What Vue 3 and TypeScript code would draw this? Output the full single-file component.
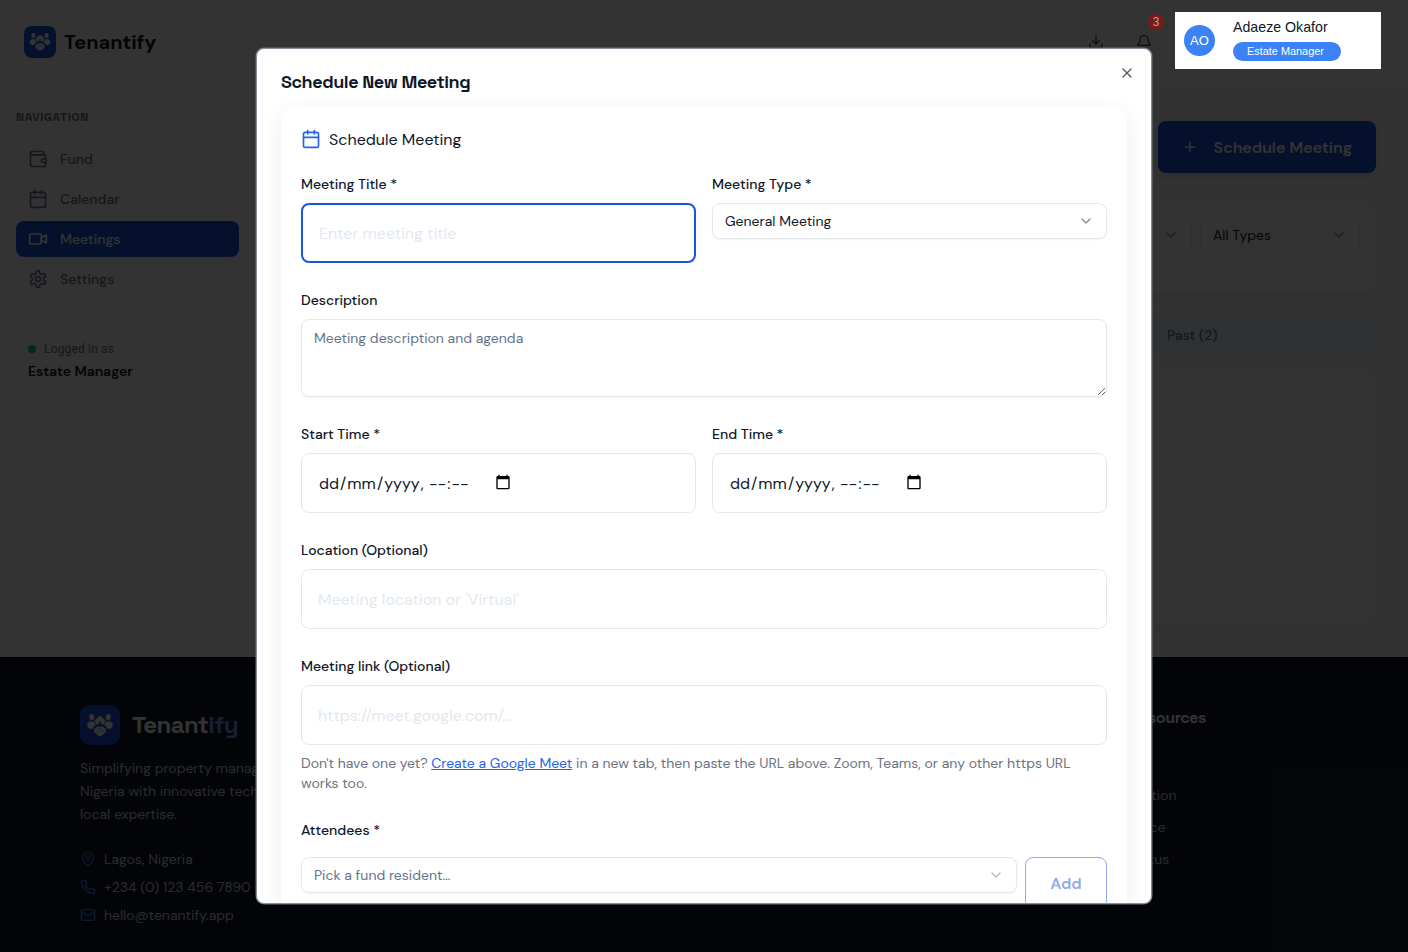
<script setup lang="ts">
import { h, type FunctionalComponent } from 'vue'

const iconPaths: Record<string, string[]> = {
  wallet: [
    'M19 7V4a1 1 0 0 0-1-1H5a2 2 0 0 0 0 4h15a1 1 0 0 1 1 1v4h-3a2 2 0 0 0 0 4h3a1 1 0 0 0 1-1v-2a1 1 0 0 0-1-1',
    'M3 5v14a2 2 0 0 0 2 2h15a1 1 0 0 0 1-1v-4',
  ],
  calendar: ['M8 2v4', 'M16 2v4', 'M5 4h14a2 2 0 0 1 2 2v14a2 2 0 0 1-2 2H5a2 2 0 0 1-2-2V6a2 2 0 0 1 2-2z', 'M3 10h18'],
  video: ['m16 13 5.223 3.482a.5.5 0 0 0 .777-.416V7.87a.5.5 0 0 0-.752-.432L16 10.5', 'M4 6h10a2 2 0 0 1 2 2v8a2 2 0 0 1-2 2H4a2 2 0 0 1-2-2V8a2 2 0 0 1 2-2z'],
  settings: [
    'M12.22 2h-.44a2 2 0 0 0-2 2v.18a2 2 0 0 1-1 1.73l-.43.25a2 2 0 0 1-2 0l-.15-.08a2 2 0 0 0-2.73.73l-.22.38a2 2 0 0 0 .73 2.73l.15.1a2 2 0 0 1 1 1.72v.51a2 2 0 0 1-1 1.74l-.15.09a2 2 0 0 0-.73 2.73l.22.38a2 2 0 0 0 2.73.73l.15-.08a2 2 0 0 1 2 0l.43.25a2 2 0 0 1 1 1.73V20a2 2 0 0 0 2 2h.44a2 2 0 0 0 2-2v-.18a2 2 0 0 1 1-1.73l.43-.25a2 2 0 0 1 2 0l.15.08a2 2 0 0 0 2.73-.73l.22-.39a2 2 0 0 0-.73-2.73l-.15-.08a2 2 0 0 1-1-1.74v-.5a2 2 0 0 1 1-1.74l.15-.09a2 2 0 0 0 .73-2.73l-.22-.38a2 2 0 0 0-2.73-.73l-.15.08a2 2 0 0 1-2 0l-.43-.25a2 2 0 0 1-1-1.73V4a2 2 0 0 0-2-2z',
    'M15 12a3 3 0 1 1-6 0 3 3 0 0 1 6 0z',
  ],
  download: ['M12 15V3', 'M21 15v4a2 2 0 0 1-2 2H5a2 2 0 0 1-2-2v-4', 'm7 10 5 5 5-5'],
  bell: ['M10.268 21a2 2 0 0 0 3.464 0', 'M3.262 15.326A1 1 0 0 0 4 17h16a1 1 0 0 0 .74-1.673C19.41 13.956 18 12.499 18 8A6 6 0 0 0 6 8c0 4.499-1.411 5.956-2.738 7.326'],
  plus: ['M5 12h14', 'M12 5v14'],
  x: ['M18 6 6 18', 'm6 6 12 12'],
  chevron: ['m6 9 6 6 6-6'],
  pin: ['M20 10c0 4.993-5.539 10.193-7.399 11.799a1 1 0 0 1-1.202 0C9.539 20.193 4 14.993 4 10a8 8 0 0 1 16 0', 'M15 10a3 3 0 1 1-6 0 3 3 0 0 1 6 0z'],
  phone: ['M22 16.92v3a2 2 0 0 1-2.18 2 19.79 19.79 0 0 1-8.63-3.07 19.5 19.5 0 0 1-6-6 19.79 19.79 0 0 1-3.07-8.67A2 2 0 0 1 4.11 2h3a2 2 0 0 1 2 1.72 12.84 12.84 0 0 0 .7 2.81 2 2 0 0 1-.45 2.11L8.09 9.91a16 16 0 0 0 6 6l1.27-1.27a2 2 0 0 1 2.11-.45 12.84 12.84 0 0 0 2.81.7A2 2 0 0 1 22 16.92z'],
  mail: ['M4 4h16a2 2 0 0 1 2 2v12a2 2 0 0 1-2 2H4a2 2 0 0 1-2-2V6a2 2 0 0 1 2-2z', 'm22 7-8.97 5.7a1.94 1.94 0 0 1-2.06 0L2 7'],
}

const Icon: FunctionalComponent<{ name: string; size?: number }> = (props) =>
  h(
    'svg',
    {
      width: props.size ?? 16,
      height: props.size ?? 16,
      viewBox: '0 0 24 24',
      fill: 'none',
      stroke: 'currentColor',
      'stroke-width': 2,
      'stroke-linecap': 'round',
      'stroke-linejoin': 'round',
    },
    iconPaths[props.name].map((d) => h('path', { d })),
  )
Icon.props = ['name', 'size']

const BrandMark: FunctionalComponent<{ size: number }> = (props) =>
  h('svg', { width: props.size, height: props.size, viewBox: '0 0 32 32' }, [
    h('rect', { width: 32, height: 32, rx: 8, fill: '#1a56db' }),
    h('g', { fill: '#fff' }, [
      h('ellipse', { cx: 9.4, cy: 9.6, rx: 2.1, ry: 2.5 }),
      h('ellipse', { cx: 22.6, cy: 9.6, rx: 2.1, ry: 2.5 }),
      h('path', { d: 'M16 8.4l-5 4.600h1.400v3l1.600-.8h4l1.600.8v-3h1.400z' }),
      h('path', { d: 'M5.800 16c0-2 1.400-3 3.200-3 1.400 0 2.400.7 2.800 1.700l.4 1.500-2.800 3C7.200 19.200 5.800 18 5.800 16z' }),
      h('path', { d: 'M26.200 16c0-2-1.400-3-3.200-3-1.400 0-2.400.7-2.800 1.700l-.4 1.500 2.800 3c2.200 0 3.600-1.200 3.600-3.200z' }),
      h('path', { d: 'M11.200 19.400l3-2.500 1.800.6 1.800-.6 3 2.500-.4 2.600-3.300 2.600h-2.200l-3.300-2.600z' }),
    ]),
    h('path', { d: 'M15.300 13h1.400v2.200h-1.400z', fill: '#1a56db' }),
    h('path', { d: 'M13.400 20.200l2.400-1.600 3.600 3M13 22l1.400-1.200M14.400 23.200l1.400-1.400', stroke: '#1a56db', 'stroke-width': 0.45, fill: 'none' }),
  ])
BrandMark.props = ['size']

const navItems = [
  { label: 'Fund', icon: 'wallet', active: false },
  { label: 'Calendar', icon: 'calendar', active: false },
  { label: 'Meetings', icon: 'video', active: true },
  { label: 'Settings', icon: 'settings', active: false },
]
const contacts = [
  { icon: 'pin', text: 'Lagos, Nigeria' },
  { icon: 'phone', text: '+234 (0) 123 456 7890' },
  { icon: 'mail', text: 'hello@tenantify.app' },
]
const resourceLinks = ['Community', 'Documentation', 'API Reference', 'System Status']
const timeFields = ['Start Time *', 'End Time *']
</script>

<template>
  <div class="page">
    <header class="topbar">
      <div class="brand"><BrandMark :size="32" /><span>Tenantify</span></div>
      <div class="tools">
        <Icon name="download" />
        <Icon name="bell" />
      </div>
    </header>

    <div class="body">
      <aside class="sidebar">
        <div class="nav-title">NAVIGATION</div>
        <nav>
          <a v-for="item in navItems" :key="item.label" class="nav-item" :class="{ active: item.active }">
            <Icon :name="item.icon" :size="20" />{{ item.label }}
          </a>
        </nav>
        <div class="session">
          <div class="session-line"><i class="dot"></i>Logged in as</div>
          <strong>Estate Manager</strong>
        </div>
      </aside>

      <main class="main">
        <div class="actions">
          <button class="primary"><Icon name="plus" />Schedule Meeting</button>
        </div>
        <section class="panel filters">
          <div class="select narrow"><span></span><Icon name="chevron" class="chev" /></div>
          <div class="select narrow"><span>All Types</span><Icon name="chevron" class="chev" /></div>
        </section>
        <div class="tabs"><span>Past (2)</span></div>
        <section class="panel results"></section>
      </main>
    </div>

    <footer class="footer">
      <div class="about">
        <div class="footer-brand"><BrandMark :size="40" /><span>Tenant<em>ify</em></span></div>
        <p>Simplifying property management in<br />Nigeria with innovative technology and<br />local expertise.</p>
        <ul class="contacts">
          <li v-for="c in contacts" :key="c.text"><Icon :name="c.icon" />{{ c.text }}</li>
        </ul>
      </div>
      <div class="links">
        <h4>Legal Resources</h4>
        <a v-for="l in resourceLinks" :key="l">{{ l }}</a>
      </div>
    </footer>

    <div class="overlay">
      <div class="dialog" role="dialog">
        <h2>Schedule New Meeting</h2>
        <Icon name="x" class="close" />
        <div class="card">
          <div class="card-title"><Icon name="calendar" :size="20" /><span>Schedule Meeting</span></div>

          <div class="row">
            <div class="field">
              <label>Meeting Title *</label>
              <input class="input focused" placeholder="Enter meeting title" />
            </div>
            <div class="field">
              <label>Meeting Type *</label>
              <div class="select"><span>General Meeting</span><Icon name="chevron" class="chev" /></div>
            </div>
          </div>

          <div class="field">
            <label>Description</label>
            <textarea class="textarea" placeholder="Meeting description and agenda"></textarea>
          </div>

          <div class="row">
            <div v-for="t in timeFields" :key="t" class="field">
              <label>{{ t }}</label>
              <div class="input datetime">
                <div class="segments">
                  <span>dd</span>/<span>mm</span>/<span>yyyy</span>,&nbsp;<span>--</span>:<span>--</span>
                </div>
                <svg width="16" height="16" viewBox="0 0 24 24">
                  <path d="M20 3h-1V1h-2v2H7V1H5v2H4c-1.100 0-2 .9-2 2v16c0 1.100.9 2 2 2h16c1.100 0 2-.9 2-2V5c0-1.100-.9-2-2-2zm0 18H4V8h16v13z" />
                </svg>
              </div>
            </div>
          </div>

          <div class="field">
            <label>Location (Optional)</label>
            <input class="input" placeholder="Meeting location or 'Virtual'" />
          </div>

          <div class="field">
            <label>Meeting link (Optional)</label>
            <input class="input" placeholder="https://meet.google.com/..." />
            <p class="hint">
              Don't have one yet? <a>Create a Google Meet</a> in a new tab, then paste the URL above. Zoom, Teams, or any
              other https URL works too.
            </p>
          </div>

          <div class="field attendees">
            <label>Attendees *</label>
            <div class="picker">
              <div class="select muted"><span>Pick a fund resident…</span><Icon name="chevron" class="chev" /></div>
              <button class="add">Add</button>
            </div>
          </div>
        </div>
      </div>
    </div>

    <span class="badge">3</span>
    <div class="user">
      <span class="avatar">AO</span>
      <div>
        <div class="user-name">Adaeze Okafor</div>
        <span class="role">Estate Manager</span>
      </div>
    </div>
  </div>
</template>

<style>
body { margin: 0; overflow: hidden; }
</style>

<style scoped>
* { box-sizing: border-box; }
.page {
  position: relative;
  width: 1408px;
  height: 952px;
  overflow: hidden;
  display: flex;
  flex-direction: column;
  background: #fbfbfb;
  color: #0f172a;
  font: 400 14px/20px 'DM Sans', Inter, sans-serif;
}
svg { flex: none; display: block; }
button, input, textarea { font-family: inherit; }

.topbar {
  height: 85px;
  flex: none;
  display: flex;
  align-items: center;
  justify-content: space-between;
  padding: 0 256px 0 24px;
  background: #fff;
  border-bottom: 1px solid #eceff3;
}
.brand { display: flex; align-items: center; gap: 8px; font-size: 20px; font-weight: 700; line-height: 28px; }
.tools { display: flex; gap: 32px; color: #334155; }

.body { flex: none; height: 572px; display: flex; }
.sidebar { width: 256px; flex: none; padding: 22px 17px 0 16px; background: #fff; }
.nav-title {
  font-family: 'Space Grotesk', 'DM Sans', sans-serif;
  font-size: 12px;
  font-weight: 600;
  letter-spacing: 0.6px;
  color: #64748b;
}
nav { display: flex; flex-direction: column; gap: 4px; margin-top: 14px; }
.nav-item {
  display: flex;
  align-items: center;
  gap: 12px;
  height: 36px;
  padding: 0 12px;
  border-radius: 8px;
  font-weight: 500;
  color: #64748b;
}
.nav-item.active { background: #1a56db; color: #fff; }
.session { margin-top: 32px; height: 63px; padding: 10px 12px; border-radius: 8px; background: #fcfdfe; }
.session-line {
  display: flex;
  align-items: center;
  gap: 8px;
  font-family: Roboto, 'DM Sans', sans-serif;
  font-size: 12px;
  letter-spacing: 0.17px;
  color: #64748b;
}
.session strong { display: block; margin-top: 2px; font-weight: 600; }
.dot { width: 8px; height: 8px; border-radius: 50%; background: #10b981; }

.main { flex: 1; padding: 36px 32px 0; }
.actions { display: flex; justify-content: flex-end; }
.primary {
  display: flex;
  align-items: center;
  gap: 16px;
  height: 52px;
  padding: 0 24px;
  border: 0;
  border-radius: 8px;
  background: #1a56db;
  color: #fff;
  font-size: 16px;
  font-weight: 600;
  box-shadow: 0 4px 12px rgba(0, 0, 0, 0.12);
}
.panel { border-radius: 16px; background: #fff; box-shadow: 0 4px 16px rgba(0, 0, 0, 0.08); }
.filters { display: flex; justify-content: flex-end; gap: 8px; height: 92px; margin-top: 28px; padding: 16px; }
.tabs {
  display: flex;
  align-items: center;
  height: 36px;
  margin-top: 24px;
  padding-left: 879px;
  border-radius: 8px;
  background: #f1f5f9;
  color: #64748b;
  font-weight: 500;
}
.results { height: 256px; margin-top: 16px; }

.footer {
  flex: 1;
  display: grid;
  grid-template-columns: 1fr 252px;
  padding: 48px 80px 0;
  background: #0f172a;
  color: #d1d5db;
}
.footer-brand {
  display: flex;
  align-items: center;
  gap: 12px;
  color: #fff;
  font: 700 24px/32px 'Space Grotesk', 'DM Sans', sans-serif;
  letter-spacing: -0.6px;
}
.footer-brand em { font-style: normal; color: #60a5fa; }
.about p { margin: 12px 0 24px; line-height: 22.75px; }
.contacts { list-style: none; margin: 0; padding: 0; display: flex; flex-direction: column; gap: 8px; }
.contacts li { display: flex; align-items: center; gap: 8px; }
.contacts svg { color: #3b82f6; }
.links { display: flex; flex-direction: column; gap: 12px; padding-top: 1px; }
.links h4 {
  margin: 0 0 11px 10px;
  color: #fff;
  font: 600 16px/24px 'Space Grotesk', 'DM Sans', sans-serif;
  letter-spacing: -0.4px;
}

.overlay {
  position: absolute;
  inset: 0;
  display: grid;
  place-items: center;
  background: rgba(0, 0, 0, 0.8);
}
.dialog {
  position: relative;
  width: 896px;
  height: 856.8px;
  overflow: hidden;
  padding: 24px;
  border: 1px solid #868d96;
  border-radius: 8px;
  background: #fff;
  box-shadow: 0 0 0 0.5px #6b7280;
}
.dialog h2 { margin: 0 0 16px; font: 600 18px/18px 'Space Grotesk', 'DM Sans', sans-serif; letter-spacing: -0.45px; }
.close { position: absolute; top: 16px; right: 16px; opacity: 0.7; }
.card {
  display: flex;
  flex-direction: column;
  gap: 28px;
  padding: 20px 20px 60px;
  border-radius: 16px;
  background: #fff;
  box-shadow: 0 4px 20px rgba(0, 0, 0, 0.08);
}
.card-title { display: flex; align-items: center; gap: 8px; height: 24px; margin-bottom: -4px; font-size: 16px; line-height: 24px; }
.card-title span { padding-top: 2px; }
.card-title svg { color: #2563eb; }
.row { display: grid; grid-template-columns: 1fr 1fr; gap: 16px; }
.field { display: flex; flex-direction: column; gap: 8px; }
.field label { height: 20px; line-height: 18px; font-weight: 500; }
.input {
  width: 100%;
  height: 60px;
  padding: 2px 16px 0;
  border: 1px solid #e2e8f0;
  border-radius: 8px;
  outline: 0;
  background: #fff;
  color: #0f172a;
  font-size: 16px;
}
.input::placeholder { color: #e2e8f0; opacity: 1; }
.input.focused { border: 2px solid #1a56db; }
.select {
  display: flex;
  align-items: center;
  justify-content: space-between;
  width: 100%;
  height: 36px;
  padding: 0 12px;
  border: 1px solid #e2e8f0;
  border-radius: 8px;
  box-shadow: 0 1px 2px rgba(0, 0, 0, 0.05);
}
.select.narrow { width: 160px; }
.select.muted { color: #64748b; flex: 1; }
.chev { opacity: 0.5; }
.textarea {
  display: block;
  width: 100%;
  height: 78px;
  padding: 8px 12px;
  border: 1px solid #e2e8f0;
  border-radius: 8px;
  outline: 0;
  background: #fff;
  font-size: 14px;
  line-height: 20px;
  box-shadow: 0 1px 2px rgba(0, 0, 0, 0.05);
}
.textarea::placeholder { color: #64748b; opacity: 1; }
.datetime { display: flex; align-items: center; gap: 25.5px; }
.datetime svg { margin-bottom: 3px; }
.segments { display: flex; }
.segments span { padding: 0 1px; }
.hint { margin: 0; color: #6b7280; }
.hint a { color: #2563eb; text-decoration: underline; }
.field.attendees { gap: 16px; }
.picker { display: flex; align-items: flex-start; gap: 8px; }
.add {
  width: 82px;
  height: 52px;
  padding: 2px 0 0;
  border: 1px solid #1a56db;
  border-radius: 8px;
  background: #fff;
  color: #1a56db;
  font-size: 16px;
  font-weight: 600;
  opacity: 0.5;
}

.badge {
  position: absolute;
  left: 1148px;
  top: 14px;
  width: 16px;
  height: 16px;
  border-radius: 50%;
  background: #7c1a1a;
  color: #a8a8a8;
  font: 400 12px/16px 'Liberation Sans', Arial, sans-serif;
  text-align: center;
}
.user {
  position: absolute;
  left: 1175px;
  top: 12px;
  width: 206px;
  height: 57px;
  display: flex;
  gap: 18px;
  padding: 6px 9px;
  background: #fff;
  font-family: 'Liberation Sans', Arial, sans-serif;
}
.avatar {
  width: 31px;
  height: 31px;
  margin-top: 7px;
  border-radius: 50%;
  background: #3b82f6;
  color: #fff;
  font-size: 13px;
  line-height: 31px;
  text-align: center;
}
.user-name { font-size: 14.2px; line-height: 18px; white-space: nowrap; }
.role {
  display: block;
  width: 108px;
  height: 19px;
  margin-top: 6px;
  padding-left: 14px;
  border-radius: 10px;
  background: #3b82f6;
  color: #fff;
  font-size: 10.9px;
  line-height: 19px;
  white-space: nowrap;
}
</style>
